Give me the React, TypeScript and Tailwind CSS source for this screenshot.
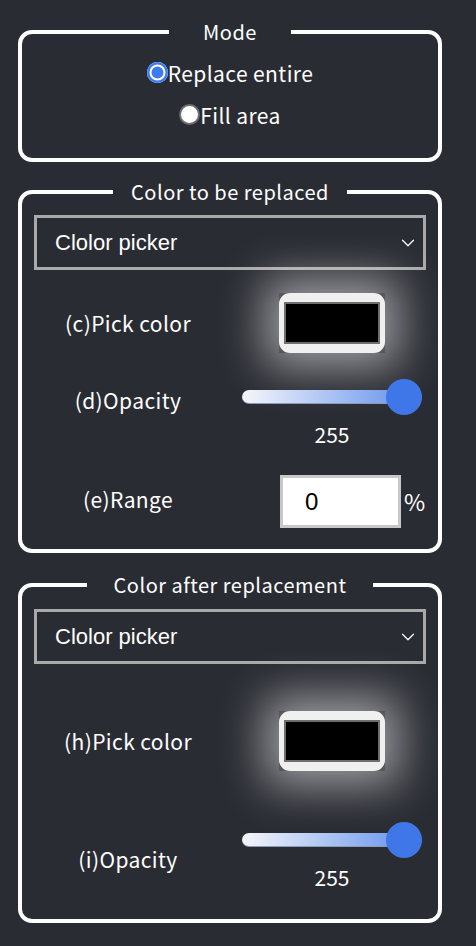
import { ChevronDown } from "lucide-react";

const jp = "font-['Noto_Sans_CJK_JP','Noto_Sans',sans-serif]";
const arial = "font-['Liberation_Sans',Arial,sans-serif]";

const Legend = ({ text, pad }: { text: string; pad: string }) => (
    <legend className={`mx-auto ${pad} text-[20px] leading-[30px] text-white tracking-[0.5px] ${jp}`}>
        {text}
    </legend>
);

const Select = () => (
    <div className="flex items-center justify-between h-[55px] border-[3px] border-[#a9a9a9] pl-[18px] pr-[4px]">
        <span className={`text-[22px] text-white ${arial}`}>Clolor picker</span>
        <ChevronDown size={22} strokeWidth={1.3} className="text-white" />
    </div>
);

const Label = ({ letter, text, className = "" }: { letter: string; text: string; className?: string }) => (
    <div className={`w-[188px] text-center text-[21px] leading-[30px] text-white tracking-[0.4px] ${jp} ${className}`}>
        ({letter}){text}
    </div>
);

const Swatch = () => (
    <div className="w-[106px] h-[60px] bg-[#5c5657] shadow-[0_0_45px_14px_rgba(255,255,255,0.55)]">
        <div className="w-full h-full rounded-[11px] bg-[#f0f0f0] flex items-center justify-center">
            <div className="w-[96px] h-[42px] bg-black border-2 border-[#6e6e6e]" />
        </div>
    </div>
);

const Slider = () => (
    <div className="flex flex-col items-center">
        <div className="relative w-[180px] h-[36px] flex items-center">
            <div className="w-full h-[14px] rounded-full bg-gradient-to-r from-[#f6f6f8] to-[#5e8bea] border-b border-[#8a9ab8]" />
            <div className="absolute right-0 top-0 w-[36px] h-[36px] rounded-full bg-[#3f77e8]" />
        </div>
        <div className={`mt-[4px] text-[21px] leading-[30px] text-white ${jp}`}>255</div>
    </div>
);

const Radio = ({ checked, label }: { checked: boolean; label: string }) => (
    <div className="flex items-center h-[30px]">
        {checked ? (
            <span className="w-[21px] h-[21px] rounded-full bg-[#3f7bf0] shadow-[inset_0_0_0_2.5px_#3f7bf0,inset_0_0_0_4.5px_#ffffff] -mt-[4px]" />
        ) : (
            <span className="w-[21px] h-[21px] rounded-full bg-white border-2 border-[#6d6d6d] -mt-[4px]" />
        )}
        <span className={`text-[21px] text-white tracking-[0.4px] ${jp}`}>{label}</span>
    </div>
);

export default function App() {
    return (
        <div className="min-h-screen bg-[#2a2c33] pt-[17px] pb-[20px]">
            <fieldset className="ml-[18px] w-[424px] border-4 border-white rounded-[14px] px-3 pb-[27px]">
                <Legend text="Mode" pad="px-[34px]" />
                <div className="flex flex-col items-center gap-[12px] mt-[12px]">
                    <Radio checked label="Replace entire" />
                    <Radio checked={false} label="Fill area" />
                </div>
            </fieldset>

            <fieldset className="ml-[18px] mt-[15px] w-[424px] border-4 border-white rounded-[14px] px-3 pb-[21px]">
                <Legend text="Color to be replaced" pad="px-[18px]" />
                <div className="mt-[8px]">
                    <Select />
                </div>
                <div className="flex items-center mt-[23px]">
                    <Label letter="c" text="Pick color" />
                    <div className="flex-1 flex justify-center pl-4">
                        <Swatch />
                    </div>
                </div>
                <div className="flex items-start mt-[26px]">
                    <Label letter="d" text="Opacity" className="mt-[6px]" />
                    <div className="flex-1 flex justify-center pl-4">
                        <Slider />
                    </div>
                </div>
                <div className="flex items-start mt-[26px]">
                    <Label letter="e" text="Range" className="mt-[9px]" />
                    <div className="flex-1 flex items-center pl-[58px]">
                        <div className="w-[121px] h-[53px] bg-white border-[3px] border-[#c8c8c8] flex items-center pl-[22px]">
                            <span className={`text-[24px] text-black ${arial}`}>0</span>
                        </div>
                        <span className={`ml-[3px] text-[23px] text-white ${jp}`}>%</span>
                    </div>
                </div>
            </fieldset>

            <fieldset className="ml-[18px] mt-[17px] w-[424px] border-4 border-white rounded-[14px] px-3 pb-[27px]">
                <Legend text="Color after replacement" pad="px-[27px]" />
                <div className="mt-[9px]">
                    <Select />
                </div>
                <div className="flex items-center mt-[47px]">
                    <Label letter="h" text="Pick color" />
                    <div className="flex-1 flex justify-center pl-4">
                        <Swatch />
                    </div>
                </div>
                <div className="flex items-start mt-[51px]">
                    <Label letter="i" text="Opacity" className="mt-[22px]" />
                    <div className="flex-1 flex justify-center pl-4">
                        <Slider />
                    </div>
                </div>
            </fieldset>
        </div>
    );
}
